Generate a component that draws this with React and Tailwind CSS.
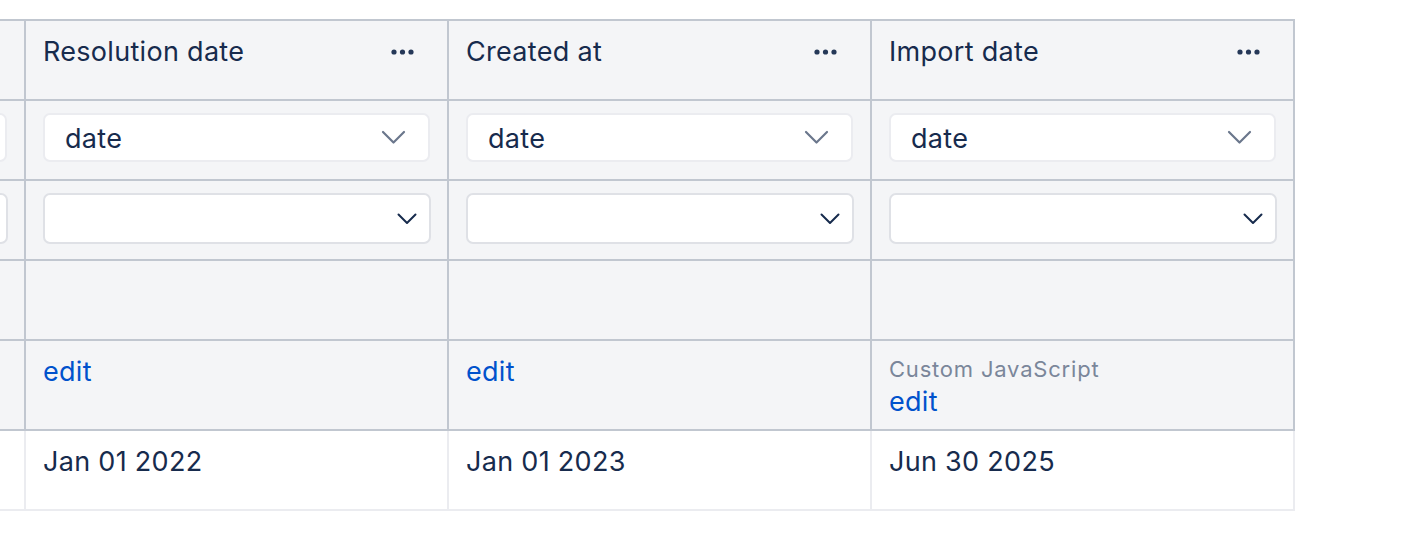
import React from "react";

const font = { fontFamily: "Inter, 'Noto Sans', sans-serif" };

function Dots() {
  return (
    <svg width="24" height="8" viewBox="0 0 24 8" className="shrink-0">
      <circle cx="4" cy="4" r="2.6" fill="#253858" />
      <circle cx="12.5" cy="4" r="2.6" fill="#253858" />
      <circle cx="21" cy="4" r="2.6" fill="#253858" />
    </svg>
  );
}

function ChevronBig() {
  return (
    <svg width="25" height="15" viewBox="0 0 25 15" className="shrink-0">
      <path d="M2 2 L12.5 12.5 L23 2" fill="none" stroke="#6b778c" strokeWidth="2.2" strokeLinecap="round" strokeLinejoin="round" />
    </svg>
  );
}

function ChevronSmall() {
  return (
    <svg width="20" height="12" viewBox="0 0 20 12" className="shrink-0">
      <path d="M1.5 1.5 L10 10 L18.5 1.5" fill="none" stroke="#172b4d" strokeWidth="2" strokeLinecap="round" strokeLinejoin="round" />
    </svg>
  );
}

function TypeSelect({ label = "date" }) {
  return (
    <div className="w-[387px] shrink-0 h-[49px] rounded-[7px] border-2 border-[#ebecf0] bg-white flex items-center justify-between pl-[20px] pr-[22px]">
      <span className="text-[27px] tracking-[0.3px] text-[#172b4d] leading-none pt-[2px]">{label}</span>
      <ChevronBig />
    </div>
  );
}

function EmptySelect() {
  return (
    <div className="w-[388px] shrink-0 h-[51px] rounded-[7px] border-2 border-[#dfe1e6] bg-white flex items-center justify-end pr-[12px]">
      <ChevronSmall />
    </div>
  );
}

const cols = [
  { title: "Resolution date", custom: false, value: "Jan 01 2022" },
  { title: "Created at", custom: false, value: "Jan 01 2023" },
  { title: "Import date", custom: true, value: "Jun 30 2025" },
];

const cell = "w-[423px] shrink-0 border-r-2 border-[#c1c7d0] px-[17px] pt-[12px]";
const textCell = "w-[423px] shrink-0 border-r-2 border-[#c1c7d0] px-[17px] pt-[13px]";
const edge = "w-[26px] shrink-0 border-r-2 border-[#c1c7d0] overflow-hidden";
const big = "text-[27px] leading-[36px] tracking-[0.3px]";

export default function App() {
  return (
    <div className="w-[1412px] h-[538px] bg-white pt-[19px] overflow-hidden" style={font}>
      <div className="w-[1295px] text-[#172b4d]">
        {/* header */}
        <div className="flex h-[82px] border-t-2 border-b-2 border-[#c1c7d0] bg-[#f4f5f7]">
          <div className={edge} />
          {cols.map((c) => (
            <div key={c.title} className={textCell + " flex items-start justify-between"}>
              <span className={big}>{c.title}</span>
              <div className="mt-[14px] mr-[16px]">
                <Dots />
              </div>
            </div>
          ))}
        </div>
        {/* type select row */}
        <div className="flex h-[80px] border-b-2 border-[#c1c7d0] bg-[#f4f5f7]">
          <div className={edge + " flex justify-end pr-[17px] pt-[12px]"}>
            <div className="w-[387px] shrink-0 h-[49px] rounded-[7px] border-2 border-[#ebecf0] bg-white" />
          </div>
          {cols.map((c) => (
            <div key={c.title} className={cell}>
              <TypeSelect />
            </div>
          ))}
        </div>
        {/* empty select row */}
        <div className="flex h-[80px] border-b-2 border-[#c1c7d0] bg-[#f4f5f7]">
          <div className={edge + " flex justify-end pr-[16px] pt-[12px]"}>
            <div className="w-[388px] shrink-0 h-[51px] rounded-[7px] border-2 border-[#dfe1e6] bg-white" />
          </div>
          {cols.map((c) => (
            <div key={c.title} className={cell}>
              <EmptySelect />
            </div>
          ))}
        </div>
        {/* empty row */}
        <div className="flex h-[80px] border-b-2 border-[#c1c7d0] bg-[#f4f5f7]">
          <div className={edge} />
          {cols.map((c) => (
            <div key={c.title} className={cell} />
          ))}
        </div>
        {/* edit row */}
        <div className="flex h-[90px] border-b-2 border-[#c1c7d0] bg-[#f4f5f7]">
          <div className={edge} />
          {cols.map((c) => (
            <div key={c.title} className={textCell + " flex flex-col items-start"}>
              {c.custom && (
                <span className="text-[22px] leading-[30px] tracking-[0.8px] text-[#7a869a]">Custom JavaScript</span>
              )}
              <span className={big + " text-[#0052cc]"}>edit</span>
            </div>
          ))}
        </div>
        {/* data row */}
        <div className="flex h-[80px] border-b-2 border-[#ebecf0] bg-white">
          <div className="w-[26px] shrink-0 border-r-2 border-[#ebecf0]" />
          {cols.map((c) => (
            <div key={c.title} className="w-[423px] shrink-0 border-r-2 border-[#ebecf0] px-[17px] pt-[13px]">
              <span className={big}>{c.value}</span>
            </div>
          ))}
        </div>
      </div>
    </div>
  );
}
